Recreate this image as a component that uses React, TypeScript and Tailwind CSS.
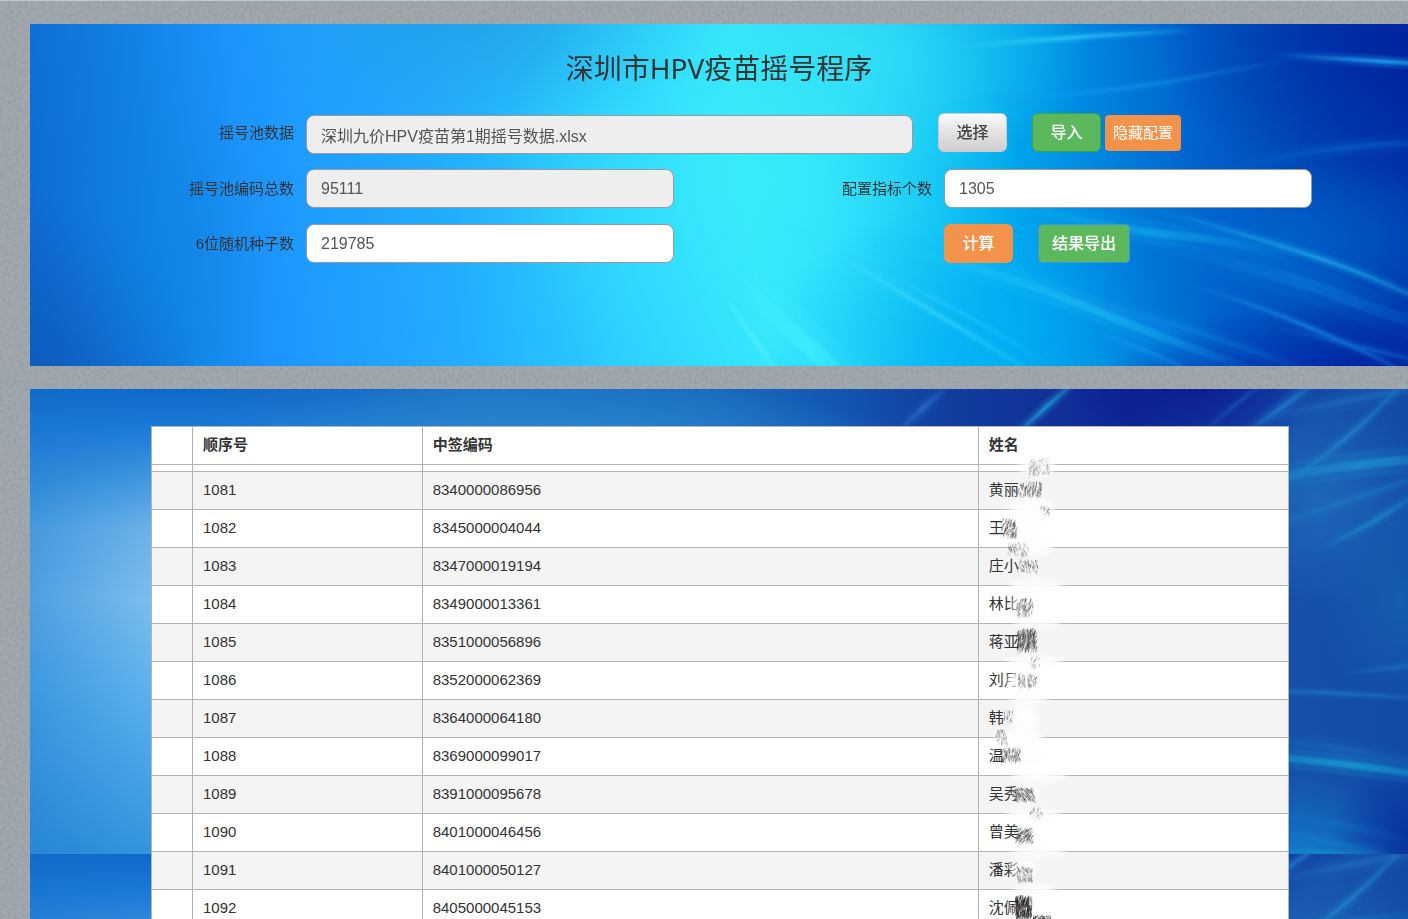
import { useState } from 'react';
import type { ReactNode } from 'react';

type Winner = {
  seq: number;
  code: string;
  name: string;
};

type Streak = {
  d: string;
  color: string;
  width: number;
  opacity: number;
};

// cx, cy, rx, ry, color, opacity
type Cloud = [number, number, number, number, string, number];

// x, y, w, h, strokes, opacity, slant
type Smudge = [number, number, number, number, number, number, number];

const winners: Winner[] = [
  { seq: 1081, code: '8340000086956', name: '黄丽' },
  { seq: 1082, code: '8345000004044', name: '王' },
  { seq: 1083, code: '8347000019194', name: '庄小' },
  { seq: 1084, code: '8349000013361', name: '林比' },
  { seq: 1085, code: '8351000056896', name: '蒋亚' },
  { seq: 1086, code: '8352000062369', name: '刘月' },
  { seq: 1087, code: '8364000064180', name: '韩' },
  { seq: 1088, code: '8369000099017', name: '温' },
  { seq: 1089, code: '8391000095678', name: '吴秀' },
  { seq: 1090, code: '8401000046456', name: '曾美' },
  { seq: 1091, code: '8401000050127', name: '潘彩' },
  { seq: 1092, code: '8405000045153', name: '沈佩' },
];

const topStreaks: Streak[] = [
  { d: 'M940 48 Q1080 36 1200 30', color: '#39d3fa', width: 3, opacity: 0.75 },
  { d: 'M1270 54 Q1350 60 1500 68', color: '#1fa5ee', width: 4, opacity: 0.9 },
  { d: 'M955 102 Q1090 96 1190 78 T1300 58', color: '#1aa0ee', width: 3, opacity: 0.5 },
  { d: 'M1000 200 Q1110 230 1180 236 T1300 262', color: '#15b4ee', width: 8, opacity: 0.6 },
  { d: 'M1140 205 Q1260 238 1330 262 T1500 340', color: '#1ba6e8', width: 4, opacity: 0.8 },
  { d: 'M1120 236 Q1290 275 1340 296 T1480 340', color: '#0b84dc', width: 12, opacity: 0.5 },
  { d: 'M860 240 Q1000 270 1080 304 T1260 372', color: '#22c6f8', width: 8, opacity: 0.65 },
  { d: 'M1000 278 Q1170 316 1330 380', color: '#0f8ce6', width: 6, opacity: 0.5 },
  { d: 'M780 222 Q900 290 1060 390', color: '#3fdcff', width: 3, opacity: 0.65 },
  { d: 'M830 250 Q960 305 1060 372', color: '#2fd0ff', width: 3, opacity: 0.45 },
  { d: 'M720 290 L790 390', color: '#5cf4ff', width: 3, opacity: 0.6 },
  { d: 'M735 280 Q800 340 880 410', color: '#48f4ff', width: 16, opacity: 0.6 },
  { d: 'M1180 282 Q1300 315 1440 390', color: '#1a94e8', width: 3, opacity: 0.7 },
  { d: 'M1270 325 Q1350 345 1460 370', color: '#126fd8', width: 4, opacity: 0.6 },
  { d: 'M1230 170 Q1330 140 1480 142', color: '#0a70d8', width: 6, opacity: 0.5 },
  { d: 'M1090 330 Q1150 350 1200 375', color: '#1aa2ee', width: 4, opacity: 0.5 },
];

const tileStreaks: Streak[] = [
  { d: 'M890 440 Q925 405 955 380', color: '#2a70cc', width: 5, opacity: 0.7 },
  { d: 'M1000 450 Q1045 406 1090 370', color: '#1d8ed0', width: 4, opacity: 1 },
  { d: 'M1195 440 Q1235 402 1275 376', color: '#1d5cb8', width: 3, opacity: 0.7 },
  { d: 'M1235 440 Q1285 406 1335 368', color: '#1f78c8', width: 5, opacity: 0.9 },
  { d: 'M1250 424 Q1330 400 1470 380', color: '#2070c4', width: 7, opacity: 0.6 },
  { d: 'M1260 496 Q1350 450 1430 352', color: '#1f86cc', width: 4, opacity: 0.8 },
  { d: 'M1230 490 Q1330 460 1490 456', color: '#1c88cc', width: 9, opacity: 0.95 },
  { d: 'M1230 540 Q1350 500 1470 460', color: '#1f78c4', width: 5, opacity: 0.65 },
  { d: 'M1310 552 Q1380 525 1440 475', color: '#1a88cc', width: 4, opacity: 0.8 },
  { d: 'M1340 674 Q1385 668 1460 660', color: '#1f78c8', width: 3, opacity: 0.6 },
  { d: 'M1210 690 Q1330 690 1460 702', color: '#1c74c4', width: 3, opacity: 0.9 },
  { d: 'M1240 738 Q1340 744 1440 768', color: '#1a6cc0', width: 7, opacity: 0.6 },
  { d: 'M1180 752 Q1330 756 1510 790', color: '#1590cc', width: 7, opacity: 1 },
  { d: 'M1230 810 Q1330 820 1410 840', color: '#156cc4', width: 7, opacity: 0.6 },
  { d: 'M1240 826 Q1320 838 1400 858', color: '#1478c8', width: 6, opacity: 0.7 },
  { d: 'M1230 858 Q1310 846 1400 860', color: '#1488cc', width: 8, opacity: 0.8 },
];

const topClouds: Cloud[] = [
  [40, 400, 170, 200, '#0f54b4', 0.75],
  [170, 270, 120, 180, '#0d86dc', 0.45],
  [470, 10, 260, 130, '#1f9de4', 0.8],
  [860, 50, 230, 130, '#34def4', 0.75],
  [760, 180, 260, 240, '#3cf2fb', 0.6],
  [960, 350, 190, 150, '#00aef6', 0.6],
  [1420, 40, 260, 170, '#001d9a', 0.75],
  [1360, 390, 260, 90, '#00149a', 0.85],
  [1290, 240, 220, 80, '#0072d6', 0.5],
];

const tileClouds: Cloud[] = [
  [560, 460, 380, 80, '#3497da', 0.8],
  [1200, 380, 150, 70, '#08128a', 0.7],
  [1320, 500, 110, 110, '#206cbe', 0.8],
  [1400, 600, 80, 110, '#1562b2', 0.8],
  [1300, 850, 110, 80, '#127ac8', 0.8],
  [1412, 835, 80, 80, '#06309c', 0.9],
];

const glows = [
  [1036, 466, 18, 9], [1030, 505, 24, 9], [1030, 522, 14, 8], [1032, 545, 20, 11],
  [1036, 584, 28, 6], [1024, 604, 12, 10], [1036, 622, 24, 5], [1034, 661, 28, 6],
  [1020, 680, 13, 9], [1028, 698, 20, 5], [1024, 717, 14, 14], [1018, 737, 24, 9],
  [1032, 755, 14, 9], [1038, 775, 28, 6], [1026, 793, 13, 9], [1032, 813, 28, 6],
  [1038, 851, 28, 5], [1024, 868, 12, 9], [1034, 889, 22, 5], [1028, 905, 10, 8],
];

const smudges: Smudge[] = [
  [1029, 457, 20, 18, 90, 0.24, 5],
  [1017, 480, 24, 17, 130, 0.42, 1],
  [1040, 503, 9, 12, 26, 0.28, 3],
  [1001, 517, 15, 21, 120, 0.42, 3],
  [1006, 541, 21, 15, 90, 0.26, -3],
  [1016, 558, 20, 14, 90, 0.34, -4],
  [1016, 597, 16, 19, 100, 0.4, 2],
  [1017, 627, 19, 24, 240, 0.5, 3],
  [1030, 655, 9, 12, 26, 0.24, 4],
  [1018, 672, 18, 15, 100, 0.34, 4],
  [1003, 709, 9, 14, 36, 0.3, 1],
  [995, 728, 11, 17, 56, 0.28, 1],
  [1000, 746, 19, 16, 130, 0.42, 1],
  [1012, 786, 20, 15, 170, 0.42, -7],
  [1029, 805, 13, 14, 46, 0.24, 4],
  [1016, 826, 17, 17, 160, 0.42, 8],
  [1015, 865, 16, 17, 110, 0.34, -4],
  [1015, 894, 16, 24, 280, 0.65, 2],
  [1032, 914, 18, 6, 90, 0.8, 4],
];

const noise = (n: number) => {
  const v = Math.sin(n * 12.9898) * 43758.5453;
  return v - Math.floor(v);
};

function Streaks({ id, items }: { id: string; items: Streak[] }) {
  return (
    <g fill="none" filter={`url(#${id}-blur)`}>
      <filter id={`${id}-blur`} colorInterpolationFilters="sRGB">
        <feGaussianBlur stdDeviation="1.3" />
      </filter>
      {items.map((s, i) => (
        <g key={s.d} opacity={s.opacity}>
          <linearGradient id={`${id}-${i}`} x1="0" y1="0" x2="1" y2="0">
            <stop offset="0" stopColor={s.color} stopOpacity="0" />
            <stop offset="0.5" stopColor={s.color} />
            <stop offset="1" stopColor={s.color} stopOpacity="0" />
          </linearGradient>
          <path d={s.d} stroke={`url(#${id}-${i})`} strokeWidth={s.width * 3} opacity="0.3" />
          <path d={s.d} stroke={`url(#${id}-${i})`} strokeWidth={s.width} />
        </g>
      ))}
    </g>
  );
}

function Clouds({ id, items }: { id: string; items: Cloud[] }) {
  return (
    <g>
      {items.map(([cx, cy, rx, ry, color, opacity], i) => (
        <g key={`${cx}-${cy}`}>
          <radialGradient id={`${id}-${i}`}>
            <stop offset="0" stopColor={color} stopOpacity={opacity} />
            <stop offset="0.5" stopColor={color} stopOpacity={opacity * 0.5} />
            <stop offset="1" stopColor={color} stopOpacity="0" />
          </radialGradient>
          <ellipse cx={cx} cy={cy} rx={rx} ry={ry} fill={`url(#${id}-${i})`} />
        </g>
      ))}
    </g>
  );
}

function Texture() {
  return (
    <svg className="absolute inset-0 h-full w-full" aria-hidden="true">
      <filter id="grain" x="0" y="0" width="100%" height="100%">
        <feTurbulence type="fractalNoise" baseFrequency="0.36 0.3" numOctaves="2" seed="4" />
        <feColorMatrix values="0 0 0 0 0.2  0 0 0 0 0.24  0 0 0 0 0.29  0.7 0 0 0 -0.22" />
      </filter>
      <rect width="100%" height="100%" filter="url(#grain)" />
    </svg>
  );
}

function TopBackdrop() {
  return (
    <svg
      className="absolute inset-0 h-full w-full"
      viewBox="30 24 1378 342"
      preserveAspectRatio="none"
      aria-hidden="true"
    >
      <linearGradient id="sea" gradientUnits="userSpaceOnUse" x1="30" y1="270" x2="1408" y2="120">
        <stop offset="0" stopColor="#0d6bd0" />
        <stop offset="0.08" stopColor="#117ee2" />
        <stop offset="0.17" stopColor="#1c96ff" />
        <stop offset="0.3" stopColor="#22acff" />
        <stop offset="0.42" stopColor="#2cceff" />
        <stop offset="0.52" stopColor="#34e4fc" />
        <stop offset="0.58" stopColor="#2adafa" />
        <stop offset="0.65" stopColor="#10c0f4" />
        <stop offset="0.71" stopColor="#00a8ee" />
        <stop offset="0.78" stopColor="#0084de" />
        <stop offset="0.85" stopColor="#0060cc" />
        <stop offset="0.93" stopColor="#0048b8" />
        <stop offset="1" stopColor="#0034a8" />
      </linearGradient>
      <rect x="30" y="24" width="1378" height="342" fill="url(#sea)" />
      <Clouds id="sea-cloud" items={topClouds} />
      <Streaks id="sea-streak" items={topStreaks} />
    </svg>
  );
}

function Tile({ id }: { id: string }) {
  return (
    <svg
      className="block h-[465px] w-full shrink-0"
      viewBox="30 389 1378 465"
      preserveAspectRatio="none"
      aria-hidden="true"
    >
      <linearGradient id={`${id}-sky`} x1="0" y1="0" x2="0" y2="1">
        <stop offset="0" stopColor="#0e68c8" />
        <stop offset="0.09" stopColor="#1d7cd8" />
        <stop offset="0.2" stopColor="#4499e0" />
        <stop offset="0.3" stopColor="#6cb3e9" />
        <stop offset="0.45" stopColor="#7bbfef" />
        <stop offset="0.65" stopColor="#5eb2ec" />
        <stop offset="0.85" stopColor="#44a2e6" />
        <stop offset="1" stopColor="#3396de" />
      </linearGradient>
      <linearGradient id={`${id}-edge`} x1="0" y1="0" x2="0.09" y2="0">
        <stop offset="0" stopColor="#1272cc" stopOpacity="0.42" />
        <stop offset="1" stopColor="#1272cc" stopOpacity="0" />
      </linearGradient>
      <linearGradient id={`${id}-teal`} x1="0" y1="0" x2="1" y2="0">
        <stop offset="0.12" stopColor="#1e74c8" stopOpacity="0" />
        <stop offset="0.32" stopColor="#1e76c6" stopOpacity="0.9" />
        <stop offset="0.5" stopColor="#1a6abe" />
        <stop offset="0.58" stopColor="#1258b4" />
        <stop offset="0.67" stopColor="#123c9e" />
        <stop offset="0.8" stopColor="#0e2896" />
        <stop offset="0.86" stopColor="#1238a0" />
        <stop offset="0.92" stopColor="#1550ac" />
        <stop offset="1" stopColor="#124aa8" />
      </linearGradient>
      <rect x="30" y="389" width="1378" height="465" fill={`url(#${id}-sky)`} />
      <rect x="30" y="389" width="1378" height="465" fill={`url(#${id}-edge)`} />
      <rect x="30" y="389" width="1378" height="465" fill={`url(#${id}-teal)`} />
      <Clouds id={`${id}-cloud`} items={tileClouds} />
      <Streaks id={`${id}-streak`} items={tileStreaks} />
    </svg>
  );
}

function NameMask() {
  return (
    <svg
      className="pointer-events-none absolute top-0 left-0"
      width="110"
      height="494"
      viewBox="978 426 110 494"
      aria-hidden="true"
    >
      <filter id="mask-blur" x="-30%" y="-30%" width="160%" height="160%">
        <feGaussianBlur stdDeviation="3" />
      </filter>
      <g fill="#fdfdfd" filter="url(#mask-blur)">
        {glows.map(([cx, cy, rx, ry]) => (
          <ellipse key={`${cx}-${cy}`} cx={cx} cy={cy} rx={rx} ry={ry} />
        ))}
      </g>
      <g stroke="#222">
        {smudges.map(([x, y, w, h, count, opacity, slant], i) =>
          Array.from({ length: count }, (_, k) => {
            const seed = i * 131 + k * 7;
            const px = x + noise(seed + 1) * w;
            const py = y + noise(seed + 2) * h * 0.85;
            const len = 1 + noise(seed + 3) * h * 0.22;
            const lean = (slant + noise(seed + 5) * 4 - 2) / 12;
            return (
              <line
                key={seed}
                x1={px}
                y1={py}
                x2={px - lean * len}
                y2={py + len}
                strokeWidth={0.8}
                opacity={opacity * (0.4 + noise(seed + 4) * 0.7)}
              />
            );
          })
        )}
      </g>
    </svg>
  );
}

function Label({ htmlFor, children }: { htmlFor: string; children: ReactNode }) {
  return (
    <label htmlFor={htmlFor} className="pr-3 text-right text-[15px] leading-5 text-[#333]">
      {children}
    </label>
  );
}

const inputClass =
  'h-[39px] w-full min-w-0 rounded-lg border border-[#999] px-3.5 text-base text-[#555] outline-none';

export default function App() {
  const [seed, setSeed] = useState('219785');
  const [quota, setQuota] = useState('1305');
  const [showConfig, setShowConfig] = useState(true);

  return (
    <div className="relative flex h-screen flex-col overflow-hidden border-t border-[#c3cbcd] bg-[#a3aaaf] font-['Liberation_Sans','Noto_Sans_CJK_SC',sans-serif] text-[#333]">
      <Texture />

      {/* 摇号配置 */}
      <section className="relative mt-[23px] ml-[30px] h-[342px] shrink-0 overflow-hidden">
        <TopBackdrop />
        <div className="relative pt-6">
          <h1 className="text-center font-['Noto_Sans','Noto_Sans_CJK_SC',sans-serif] text-[28px] leading-10">
            深圳市HPV疫苗摇号程序
          </h1>

          <div className="mt-[25px] grid h-[41px] grid-cols-[276fr_607fr_495fr]">
            <div className="grid pt-2.5">
              <Label htmlFor="pool-file">摇号池数据</Label>
            </div>
            <div className="flex items-end">
              <input
                id="pool-file"
                readOnly
                value="深圳九价HPV疫苗第1期摇号数据.xlsx"
                className={`${inputClass} bg-[#eee]`}
              />
            </div>
            <div className="flex items-start pl-[25px]">
              <button
                type="button"
                className="h-[39px] w-[69px] rounded-md border border-[#ccc] bg-linear-to-b from-[#fafafa] via-[#e4e2e3] to-[#cfcdce] text-base font-medium text-[#444]"
              >
                选择
              </button>
              <button
                type="button"
                className="ml-[25px] h-[39px] w-[69px] rounded-md border border-[#35a845] bg-[#5cb85c] text-base font-medium text-white"
              >
                导入
              </button>
              <button
                type="button"
                onClick={() => setShowConfig(!showConfig)}
                className="mt-0.5 ml-1 h-9 w-[76px] rounded bg-[#f3924a] text-[15px] whitespace-nowrap text-white"
              >
                隐藏配置
              </button>
            </div>
          </div>

          {showConfig && (
            <>
              <div className="mt-[15px] grid grid-cols-[276fr_368fr_270fr_368fr_96fr] items-center">
                <Label htmlFor="pool-total">摇号池编码总数</Label>
                <input id="pool-total" readOnly value="95111" className={`${inputClass} bg-[#eee]`} />
                <Label htmlFor="quota">配置指标个数</Label>
                <input
                  id="quota"
                  value={quota}
                  onChange={(e) => setQuota(e.target.value)}
                  className={`${inputClass} bg-white`}
                />
              </div>

              <div className="mt-4 grid grid-cols-[276fr_368fr_270fr_464fr] items-center">
                <Label htmlFor="seed">6位随机种子数</Label>
                <input
                  id="seed"
                  value={seed}
                  onChange={(e) => setSeed(e.target.value)}
                  className={`${inputClass} bg-white`}
                />
                <div className="col-start-4 flex">
                  <button
                    type="button"
                    className="h-[39px] w-[69px] rounded-md bg-[#f3924a] text-base font-medium text-white"
                  >
                    计算
                  </button>
                  <button
                    type="button"
                    className="ml-[25px] h-[39px] w-[92px] rounded border border-[#3d93e0] bg-[#5cb85c] text-base font-medium text-white"
                  >
                    结果导出
                  </button>
                </div>
              </div>
            </>
          )}
        </div>
      </section>

      {/* 中签结果 */}
      <section className="relative mt-[23px] ml-[30px] min-h-0 flex-1 overflow-hidden">
        <div className="absolute inset-0 flex flex-col overflow-hidden">
          <Tile id="tile-a" />
          <Tile id="tile-b" />
        </div>
        <div className="relative pt-[37px] pr-[119px] pl-[121px]">
          <table className="w-full table-fixed border-collapse border border-[#b3b3b3] bg-white text-left text-[15px] [&_td]:border [&_td]:border-[#b3b3b3] [&_th]:border [&_th]:border-[#b3b3b3]">
            <colgroup>
              <col className="w-[41px]" />
              <col className="w-[20.2%]" />
              <col className="w-[48.9%]" />
              <col />
            </colgroup>
            <thead>
              <tr className="h-[38px]">
                <th />
                <th className="px-2.5 font-bold">顺序号</th>
                <th className="px-2.5 font-bold">中签编码</th>
                <th className="relative px-2.5 font-bold">
                  姓名
                  <NameMask />
                </th>
              </tr>
              <tr className="h-[7px]">
                <td />
                <td />
                <td />
                <td />
              </tr>
            </thead>
            <tbody>
              {winners.map((w) => (
                <tr key={w.seq} className="h-[38px] odd:bg-[#f4f4f4]">
                  <td />
                  <td className="px-2.5">{w.seq}</td>
                  <td className="px-2.5">{w.code}</td>
                  <td className="px-2.5">{w.name}</td>
                </tr>
              ))}
            </tbody>
          </table>
        </div>
      </section>
    </div>
  );
}
